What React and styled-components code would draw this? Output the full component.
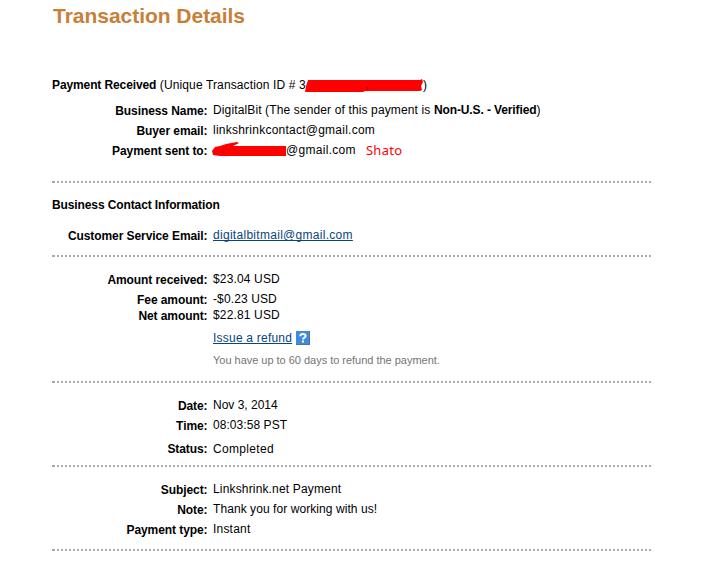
import React from 'react';
import styled, { createGlobalStyle } from 'styled-components';

const GlobalStyle = createGlobalStyle`
  body {
    margin: 0;
    background: #fff;
  }
`

function Row({ label, gap, even, spacing, children }) {
  return (
    <DetailRow $gap={gap}>
      <Label>{label}</Label>
      <Value $even={even} $spacing={spacing}>{children}</Value>
    </DetailRow>
  );
}

function App() {
  return (
    <Page>
      <GlobalStyle />
      <Title>Transaction Details</Title>

      <Section $height={158} $top={54}>
        <Line>
          <Strong>Payment Received</Strong> (Unique Transaction ID # 3
          <IdMask viewBox="0 0 119 13">
            <path d="M3 1 L115 1 L117 0 L118 3 L116 7 L117 11 L115 12 L60 12 L58 13 L0 13 L1 7Z" />
            <path d="M61 9h2" stroke="#a00000" />
          </IdMask>
          )
        </Line>
        <Row label="Business Name:" gap={9} spacing={0.13}>
          DigitalBit (The sender of this payment is <Strong>Non-U.S. - Verified</Strong>)
        </Row>
        <Row label="Buyer email:" gap={4} spacing={0.24}>linkshrinkcontact@gmail.com</Row>
        <Row label="Payment sent to:" gap={4} spacing={0.3}>
          <EmailMask viewBox="0 0 75 14">
            <path d="M0 9 L3 5 L8 4 L14 2 L25 0 L27 1 L21 4 L74 4 L74 14 L8 14 L1 13Z" />
            <path d="M10 10h1" stroke="#a00000" />
          </EmailMask>
          @gmail.com
          <HandNote>Shato</HandNote>
        </Row>
      </Section>

      <Section $height={74} $top={16}>
        <Line><Strong>Business Contact Information</Strong></Line>
        <Row label="Customer Service Email:" gap={14} spacing={0.29}>
          <Link href="#">digitalbitmail@gmail.com</Link>
        </Row>
      </Section>

      <Section $height={126} $top={16}>
        <Row label="Amount received:" spacing={0.15}>$23.04 USD</Row>
        <Row label="Fee amount:" gap={4} spacing={0.12}>-$0.23 USD</Row>
        <Row label="Net amount:" spacing={0.15}>$22.81 USD</Row>
        <Row gap={6} even spacing={0.22}>
          <Link href="#">Issue a refund</Link>
          <HelpIcon viewBox="0 0 14 14">
            <rect width="14" height="14" fill="#3e8ddd" />
            <path d="M0 13.5H13.5V0" fill="none" stroke="#56728f" />
            <path d="M4.4 5.2V4.6Q4.4 3 7 3T9.6 4.9Q9.6 6 8.1 6.8Q7.1 7.4 7.1 8.4" fill="none" stroke="#fff" strokeWidth="2" />
            <path d="M6 9.5h2v2H6z" fill="#fff" />
          </HelpIcon>
        </Row>
        <Row gap={6} even spacing={-0.02}><Hint>You have up to 60 days to refund the payment.</Hint></Row>
      </Section>

      <Section $height={84} $top={16}>
        <Row label="Date:">Nov 3, 2014</Row>
        <Row label="Time:" gap={4} spacing={0.06}>08:03:58 PST</Row>
        <Row label="Status:" gap={7} even spacing={0.33}>Completed</Row>
      </Section>

      <Section $height={84} $top={16}>
        <Row label="Subject:" spacing={0.16}>Linkshrink.net Payment</Row>
        <Row label="Note:" gap={4} spacing={0.07}>Thank you for working with us!</Row>
        <Row label="Payment type:" gap={4} spacing={0.2}>Instant</Row>
      </Section>
    </Page>
  );
}

const Page = styled.main`
  box-sizing: border-box;
  width: 652px;
  height: 568px;
  padding: 4px 0 0 52px;
  overflow: hidden;
  color: #000;
  font: 12px/16px "Liberation Sans", Arial, sans-serif;
`

const Title = styled.h1`
  margin: 0 0 0 1px;
  height: 21px;
  color: #c88039;
  font-size: 21px;
  line-height: 24px;
  letter-spacing: -0.03px;
`

/* the dotted rule takes the last two pixels of every section */
const Section = styled.section`
  box-sizing: border-box;
  height: ${props => props.$height}px;
  padding-top: ${props => props.$top - 2}px;
  background:
    linear-gradient(#aaa, #aaa) left bottom / 1px 2px no-repeat,
    linear-gradient(90deg, #aaa 2px, transparent 2px) 1px bottom / 4px 2px repeat-x;
`

const Strong = styled.b`
  letter-spacing: -0.11px;
`

const Line = styled.div`
  display: flex;
  height: 16px;
  letter-spacing: 0.13px;
  white-space: pre;
`

const DetailRow = styled.div`
  display: grid;
  grid-template-columns: 155.5px 1fr;
  column-gap: 5.5px;
  height: 16px;
  margin-top: ${props => props.$gap || 0}px;
  white-space: nowrap;
`

const Label = styled.div`
  padding-top: 1px;
  font-weight: bold;
  letter-spacing: -0.08px;
  text-align: right;
`

const Value = styled.div`
  padding-top: ${props => (props.$even ? 1 : 0)}px;
  letter-spacing: ${props => props.$spacing || 0}px;
`

const Link = styled.a`
  color: #084482;
  text-decoration: underline;
  text-decoration-skip-ink: none;
  text-underline-offset: 1px;
`

const Hint = styled.span`
  color: #757575;
  font-size: 11px;
`

const IdMask = styled.svg`
  width: 119px;
  height: 13px;
  margin: 2px -1px 0 -1px;
  fill: #f00;
`

const EmailMask = styled.svg`
  width: 75px;
  height: 14px;
  margin: 0 -1px 0 -1px;
  vertical-align: -2px;
  fill: #f00;
`

const HandNote = styled.span`
  margin-left: 10px;
  color: #f00;
  font-family: "Noto Sans", "Open Sans", sans-serif;
  font-size: 13px;
  line-height: 1;
  vertical-align: -1px;
`

const HelpIcon = styled.svg`
  width: 14px;
  height: 14px;
  margin-left: 4px;
  vertical-align: -3px;
`

export default App;
